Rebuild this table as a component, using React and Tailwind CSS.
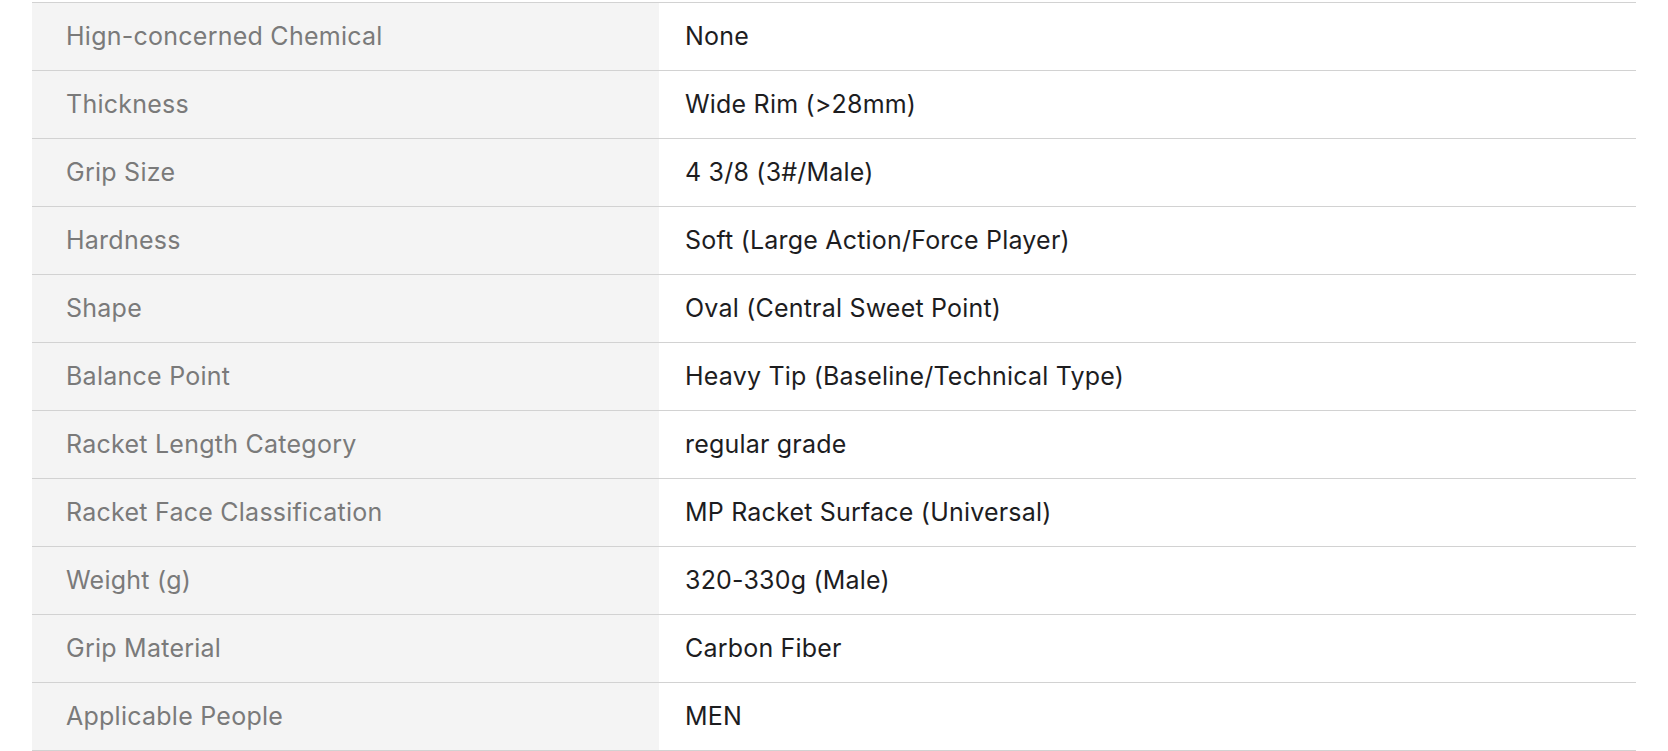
export default function App() {
  const rows = [
    ["Hign-concerned Chemical", "None"],
    ["Thickness", "Wide Rim (>28mm)"],
    ["Grip Size", "4 3/8 (3#/Male)"],
    ["Hardness", "Soft (Large Action/Force Player)"],
    ["Shape", "Oval (Central Sweet Point)"],
    ["Balance Point", "Heavy Tip (Baseline/Technical Type)"],
    ["Racket Length Category", "regular grade"],
    ["Racket Face Classification", "MP Racket Surface (Universal)"],
    ["Weight (g)", "320-330g (Male)"],
    ["Grip Material", "Carbon Fiber"],
    ["Applicable People", "MEN"],
  ];
  return (
    <div className="w-[1668px] h-[751px] bg-white px-[32px] pt-[2px] overflow-hidden" style={{ fontFamily: "Inter, 'Noto Sans', sans-serif" }}>
      <div className="border-t border-[#d2d2d2]">
        {rows.map(([k, v]) => (
          <div key={k} className="grid grid-cols-[627px_1fr] h-[68px] border-b border-[#d2d2d2]">
            <div className="bg-[#f4f4f4] pl-[34px] flex items-center text-[25px] tracking-[0.25px] text-[#7a7a7a]">{k}</div>
            <div className="pl-[26px] flex items-center text-[25px] tracking-[0.2px] text-[#1d1d1f]">{v}</div>
          </div>
        ))}
      </div>
    </div>
  );
}
